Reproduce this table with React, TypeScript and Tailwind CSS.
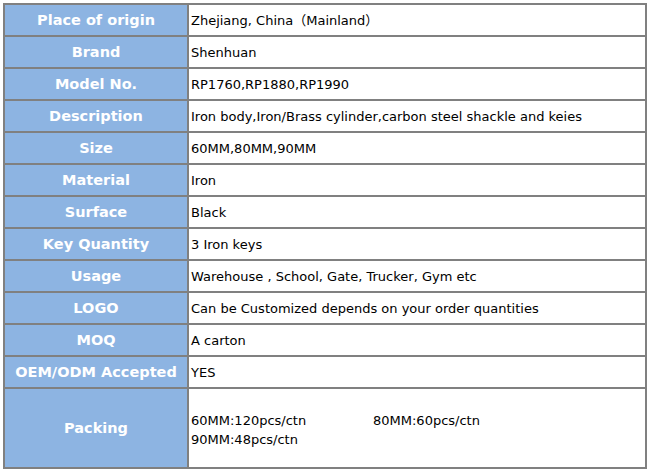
const rows: [string, string][] = [
  ["Place of origin", "Zhejiang, China（Mainland）"],
  ["Brand", "Shenhuan"],
  ["Model No.", "RP1760,RP1880,RP1990"],
  ["Description", "Iron body,Iron/Brass cylinder,carbon steel shackle and keies"],
  ["Size", "60MM,80MM,90MM"],
  ["Material", "Iron"],
  ["Surface", "Black"],
  ["Key Quantity", "3 Iron keys"],
  ["Usage", "Warehouse , School, Gate, Trucker, Gym etc"],
  ["LOGO", "Can be Customized depends on your order quantities"],
  ["MOQ", "A carton"],
  ["OEM/ODM Accepted", "YES"],
]

const font = { fontFamily: "'DejaVu Sans', 'Noto Sans CJK SC', sans-serif" }

export default function App() {
  return (
    <div className="w-[649px] h-[470px] bg-white pt-[3px] pl-[3px]" style={font}>
      <div className="w-[644px] grid grid-cols-[182px_456px] gap-[2px] p-[2px] bg-[#808080] text-[13px]">
        {rows.map(([label, value]) => (
          <div key={label} className="contents">
            <div className="h-[30px] flex items-center justify-center pt-[2px] bg-[#8db4e2] text-white font-bold text-[14.5px]">
              {label}
            </div>
            <div className="h-[30px] flex items-center pt-[2px] bg-white text-black pl-[2px]">
              {value}
            </div>
          </div>
        ))}
        <div className="h-[78px] flex items-center justify-center pt-[2px] bg-[#8db4e2] text-white font-bold text-[14.5px]">
          Packing
        </div>
        <div className="h-[78px] flex flex-col justify-center pt-[4px] bg-white text-black pl-[2px] leading-[19px]">
          <div className="flex">
            <span className="w-[182px]">60MM:120pcs/ctn</span>
            <span>80MM:60pcs/ctn</span>
          </div>
          <div>90MM:48pcs/ctn</div>
        </div>
      </div>
    </div>
  )
}
